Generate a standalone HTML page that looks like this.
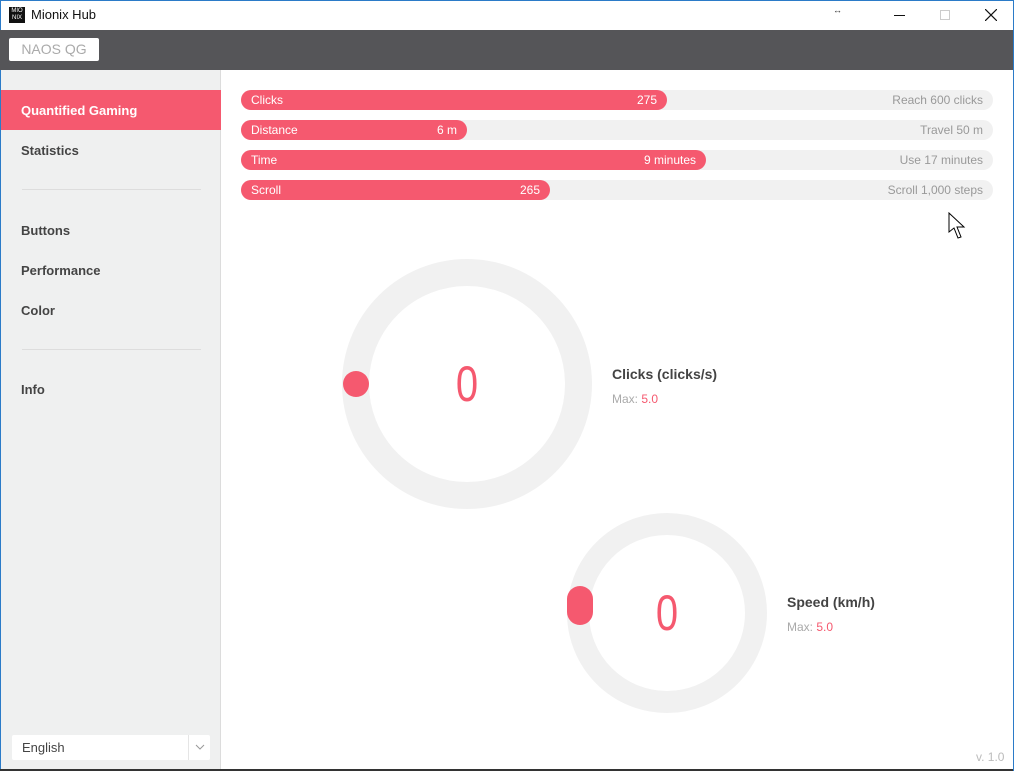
<!DOCTYPE html>
<html><head><style>
*{margin:0;padding:0;box-sizing:border-box}
body{width:1014px;height:771px;position:relative;overflow:hidden;background:#fff;font-family:"Liberation Sans",sans-serif}
.abs{position:absolute}
.title{left:0;top:0;width:1014px;height:30px;background:#fff;border-top:1px solid #2b7bc8;border-left:1px solid #2b7bc8;border-right:1px solid #2b7bc8}
.top{left:0;top:30px;width:1014px;height:40px;background:#555558}
.side{left:0;top:70px;width:221px;height:700px;background:#eff0f0;border-right:1px solid #dcdcdc;border-left:1px solid #2b7bc8}
.nav{position:absolute;left:20px;font-size:13px;color:#444;font-weight:bold;top:3px}
.bar{position:absolute;left:241px;width:752px;height:20px;border-radius:10px;background:#f1f1f1;font-size:12px;color:#999}
.fill{position:absolute;left:0;top:0;height:20px;border-radius:10px;background:#f5596f;color:#fff}
.fill .l{position:absolute;left:10px;top:3px}
.fill .r{position:absolute;right:10px;top:3px}
.bar .g{position:absolute;right:10px;top:3px}
</style></head><body>
<div class="abs title">
 <div class="abs" style="left:8px;top:6px;width:16px;height:16px;background:#111;color:#fff;font-size:6px;line-height:7px;text-align:center;padding-top:1px">MIO<br>NIX</div>
 <div class="abs" style="left:30px;top:6px;font-size:13px;color:#111">Mionix Hub</div>
 <div class="abs" style="left:832px;top:4px;font-size:9px;color:#333">↔</div>
 <div class="abs" style="left:893px;top:14px;width:11px;height:1px;background:#111"></div>
 <div class="abs" style="left:939px;top:9px;width:10px;height:10px;border:1px solid #ccc"></div>
 <svg class="abs" style="left:984px;top:8px" width="12" height="12"><path d="M0 0L12 12M12 0L0 12" stroke="#111" stroke-width="1.2"/></svg>
</div>
<div class="abs top"><div class="abs" style="left:9px;top:8px;width:90px;height:23px;background:#fff;border-radius:2px;color:#aaa;font-size:14px;text-align:center;line-height:23px">NAOS QG</div></div>
<div class="abs side">
 <div class="abs" style="left:0;top:20px;width:220px;height:40px;background:#f5596f"></div>
 <div class="nav" style="top:33px;color:#fff">Quantified Gaming</div>
 <div class="nav" style="top:73px">Statistics</div>
 <div class="abs" style="left:21px;top:119px;width:179px;height:1px;background:#ddd"></div>
 <div class="nav" style="top:153px">Buttons</div>
 <div class="nav" style="top:193px">Performance</div>
 <div class="nav" style="top:233px">Color</div>
 <div class="abs" style="left:21px;top:279px;width:179px;height:1px;background:#ddd"></div>
 <div class="nav" style="top:312px">Info</div>
 <div class="abs" style="left:11px;top:665px;width:198px;height:25px;background:#fff;border-radius:2px;font-size:13px;color:#444;line-height:25px;padding-left:10px">English
  <div class="abs" style="left:176px;top:0;width:1px;height:25px;background:#e5e5e5"></div>
  <svg class="abs" style="left:183px;top:9px" width="10" height="7"><path d="M1 1L5 5L9 1" stroke="#999" fill="none"/></svg>
 </div>
</div>
<div class="abs" style="left:0;top:769px;width:1014px;height:2px;background:#333"></div>
<div class="abs" style="left:1013px;top:0;width:1px;height:771px;background:#2b7bc8"></div>

<div class="bar" style="top:90px"><div class="fill" style="width:426px"><span class="l">Clicks</span><span class="r">275</span></div><span class="g">Reach 600 clicks</span></div>
<div class="bar" style="top:120px"><div class="fill" style="width:226px"><span class="l">Distance</span><span class="r">6 m</span></div><span class="g">Travel 50 m</span></div>
<div class="bar" style="top:150px"><div class="fill" style="width:465px"><span class="l">Time</span><span class="r">9 minutes</span></div><span class="g">Use 17 minutes</span></div>
<div class="bar" style="top:180px"><div class="fill" style="width:309px"><span class="l">Scroll</span><span class="r">265</span></div><span class="g">Scroll 1,000 steps</span></div>

<svg class="abs" style="left:948px;top:212px" width="18" height="28"><path d="M1 1L1 20L6 16L10 26L13 25L9 15L16 15Z" fill="#fff" stroke="#000"/></svg>

<div class="abs" style="left:342px;top:259px;width:250px;height:250px;border-radius:50%;border:27px solid #f1f1f1"></div>
<div class="abs" style="left:343px;top:371px;width:26px;height:26px;border-radius:50%;background:#f5596f"></div>
<div class="abs" style="left:417px;top:356px;width:100px;text-align:center;font-size:50px;color:#f5596f;line-height:56px;transform:scaleX(0.8)">0</div>
<div class="abs" style="left:612px;top:366px;font-size:14px;font-weight:bold;color:#444">Clicks (clicks/s)</div>
<div class="abs" style="left:612px;top:392px;font-size:12px;color:#aaa">Max: <span style="color:#f5596f">5.0</span></div>

<div class="abs" style="left:567px;top:513px;width:200px;height:200px;border-radius:50%;border:22px solid #f1f1f1"></div>
<div class="abs" style="left:567px;top:586px;width:26px;height:39px;border-radius:13px;background:#f5596f"></div>
<div class="abs" style="left:617px;top:585px;width:100px;text-align:center;font-size:50px;color:#f5596f;line-height:56px;transform:scaleX(0.8)">0</div>
<div class="abs" style="left:787px;top:594px;font-size:14px;font-weight:bold;color:#444">Speed (km/h)</div>
<div class="abs" style="left:787px;top:620px;font-size:12px;color:#aaa">Max: <span style="color:#f5596f">5.0</span></div>

<div class="abs" style="left:976px;top:750px;font-size:12px;color:#bbb">v. 1.0</div>
</body></html>
